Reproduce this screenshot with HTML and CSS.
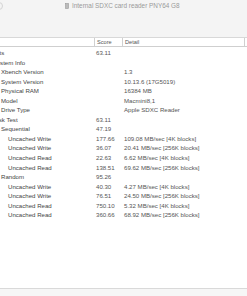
FILE: index.html
```html
<!DOCTYPE html>
<html>
<head>
    <link rel="stylesheet" href="styles.css">
</head>
<body>
    <div class="window">
        <div class="titlebar">
            <span class="winbtn"></span>
            <span class="title">
                <svg class="disk" width="4" height="6" viewBox="0 0 4 6"><rect x="0.5" y="0.5" width="3" height="5" fill="#bbb" stroke="#999" stroke-width="0.6"/></svg>
                Internal SDXC card reader PNY64 G8
            </span>
        </div>
        <div class="head">
            <span class="hcell"></span>
            <span class="hcell sep">Score</span>
            <span class="hcell sep last">Detail</span>
        </div>
        <div class="rows">
            <div class="row"><span class="label lv0">Results</span><span class="score">63.11</span><span class="detail"></span></div>
            <div class="row"><span class="label lv1">System Info</span><span class="score"></span><span class="detail"></span></div>
            <div class="row"><span class="label lv2">Xbench Version</span><span class="score"></span><span class="detail">1.3</span></div>
            <div class="row"><span class="label lv2">System Version</span><span class="score"></span><span class="detail">10.13.6 (17G5019)</span></div>
            <div class="row"><span class="label lv2">Physical RAM</span><span class="score"></span><span class="detail">16384 MB</span></div>
            <div class="row"><span class="label lv2">Model</span><span class="score"></span><span class="detail">Macmini8,1</span></div>
            <div class="row"><span class="label lv2">Drive Type</span><span class="score"></span><span class="detail">Apple SDXC Reader</span></div>
            <div class="row"><span class="label lv1">Disk Test</span><span class="score">63.11</span><span class="detail"></span></div>
            <div class="row"><span class="label lv2">Sequential</span><span class="score">47.19</span><span class="detail"></span></div>
            <div class="row"><span class="label lv3">Uncached Write</span><span class="score">177.66</span><span class="detail">109.08 MB/sec [4K blocks]</span></div>
            <div class="row"><span class="label lv3">Uncached Write</span><span class="score">36.07</span><span class="detail">20.41 MB/sec [256K blocks]</span></div>
            <div class="row"><span class="label lv3">Uncached Read</span><span class="score">22.63</span><span class="detail">6.62 MB/sec [4K blocks]</span></div>
            <div class="row"><span class="label lv3">Uncached Read</span><span class="score">138.51</span><span class="detail">69.62 MB/sec [256K blocks]</span></div>
            <div class="row"><span class="label lv2">Random</span><span class="score">95.26</span><span class="detail"></span></div>
            <div class="row"><span class="label lv3">Uncached Write</span><span class="score">40.30</span><span class="detail">4.27 MB/sec [4K blocks]</span></div>
            <div class="row"><span class="label lv3">Uncached Write</span><span class="score">76.51</span><span class="detail">24.50 MB/sec [256K blocks]</span></div>
            <div class="row"><span class="label lv3">Uncached Read</span><span class="score">750.10</span><span class="detail">5.32 MB/sec [4K blocks]</span></div>
            <div class="row"><span class="label lv3">Uncached Read</span><span class="score">360.66</span><span class="detail">68.92 MB/sec [256K blocks]</span></div>
        </div>
        <div class="statusbar"></div>
    </div>
</body>
</html>
```

FILE: styles.css
```css
body {
    margin: 0;
    font-family: "Liberation Sans", Arial, sans-serif;
    color: #444;
    background: #fff;
}

.window {
    width: 247px;
    height: 296px;
    display: flex;
    flex-direction: column;
    overflow: hidden;
}

.titlebar {
    height: 38px;
    background: #f4f4f4;
    display: flex;
    align-items: flex-start;
    padding-top: 2px;
    box-sizing: border-box;
    border-bottom: 1px solid #d8d8d8;
}

.winbtn {
    width: 8px;
    height: 8px;
    margin-left: -5px;
    border: 1px solid #d4d4d4;
    border-radius: 50%;
    box-sizing: border-box;
}

.title {
    margin-left: 62px;
    font-size: 6.4px;
    line-height: 8px;
    color: #9a9a9a;
    display: flex;
    align-items: center;
    gap: 3px;
}

.head {
    display: grid;
    grid-template-columns: 94px 28px 123px;
    height: 8px;
    border-bottom: 1px solid #cfcfcf;
    font-size: 5.6px;
    line-height: 8px;
    color: #555;
}

.hcell {
    padding-left: 2px;
}

.sep {
    border-left: 1px solid #d0d0d0;
}

.last {
    border-right: 1px solid #d0d0d0;
}

.rows {
    flex: 1;
    padding-top: 1px;
}

.row {
    display: grid;
    grid-template-columns: 96px 28px 1fr;
    height: 9.55px;
    line-height: 9.55px;
    font-size: 6.1px;
    white-space: nowrap;
}

.lv0 { margin-left: -16px; }
.lv1 { margin-left: -7px; }
.lv2 { margin-left: 1px; }
.lv3 { margin-left: 8px; }

.score, .detail {
    color: #555;
}

.statusbar {
    height: 7px;
    background: #f6f6f6;
    border-top: 1px solid #d9d9d9;
}
```
